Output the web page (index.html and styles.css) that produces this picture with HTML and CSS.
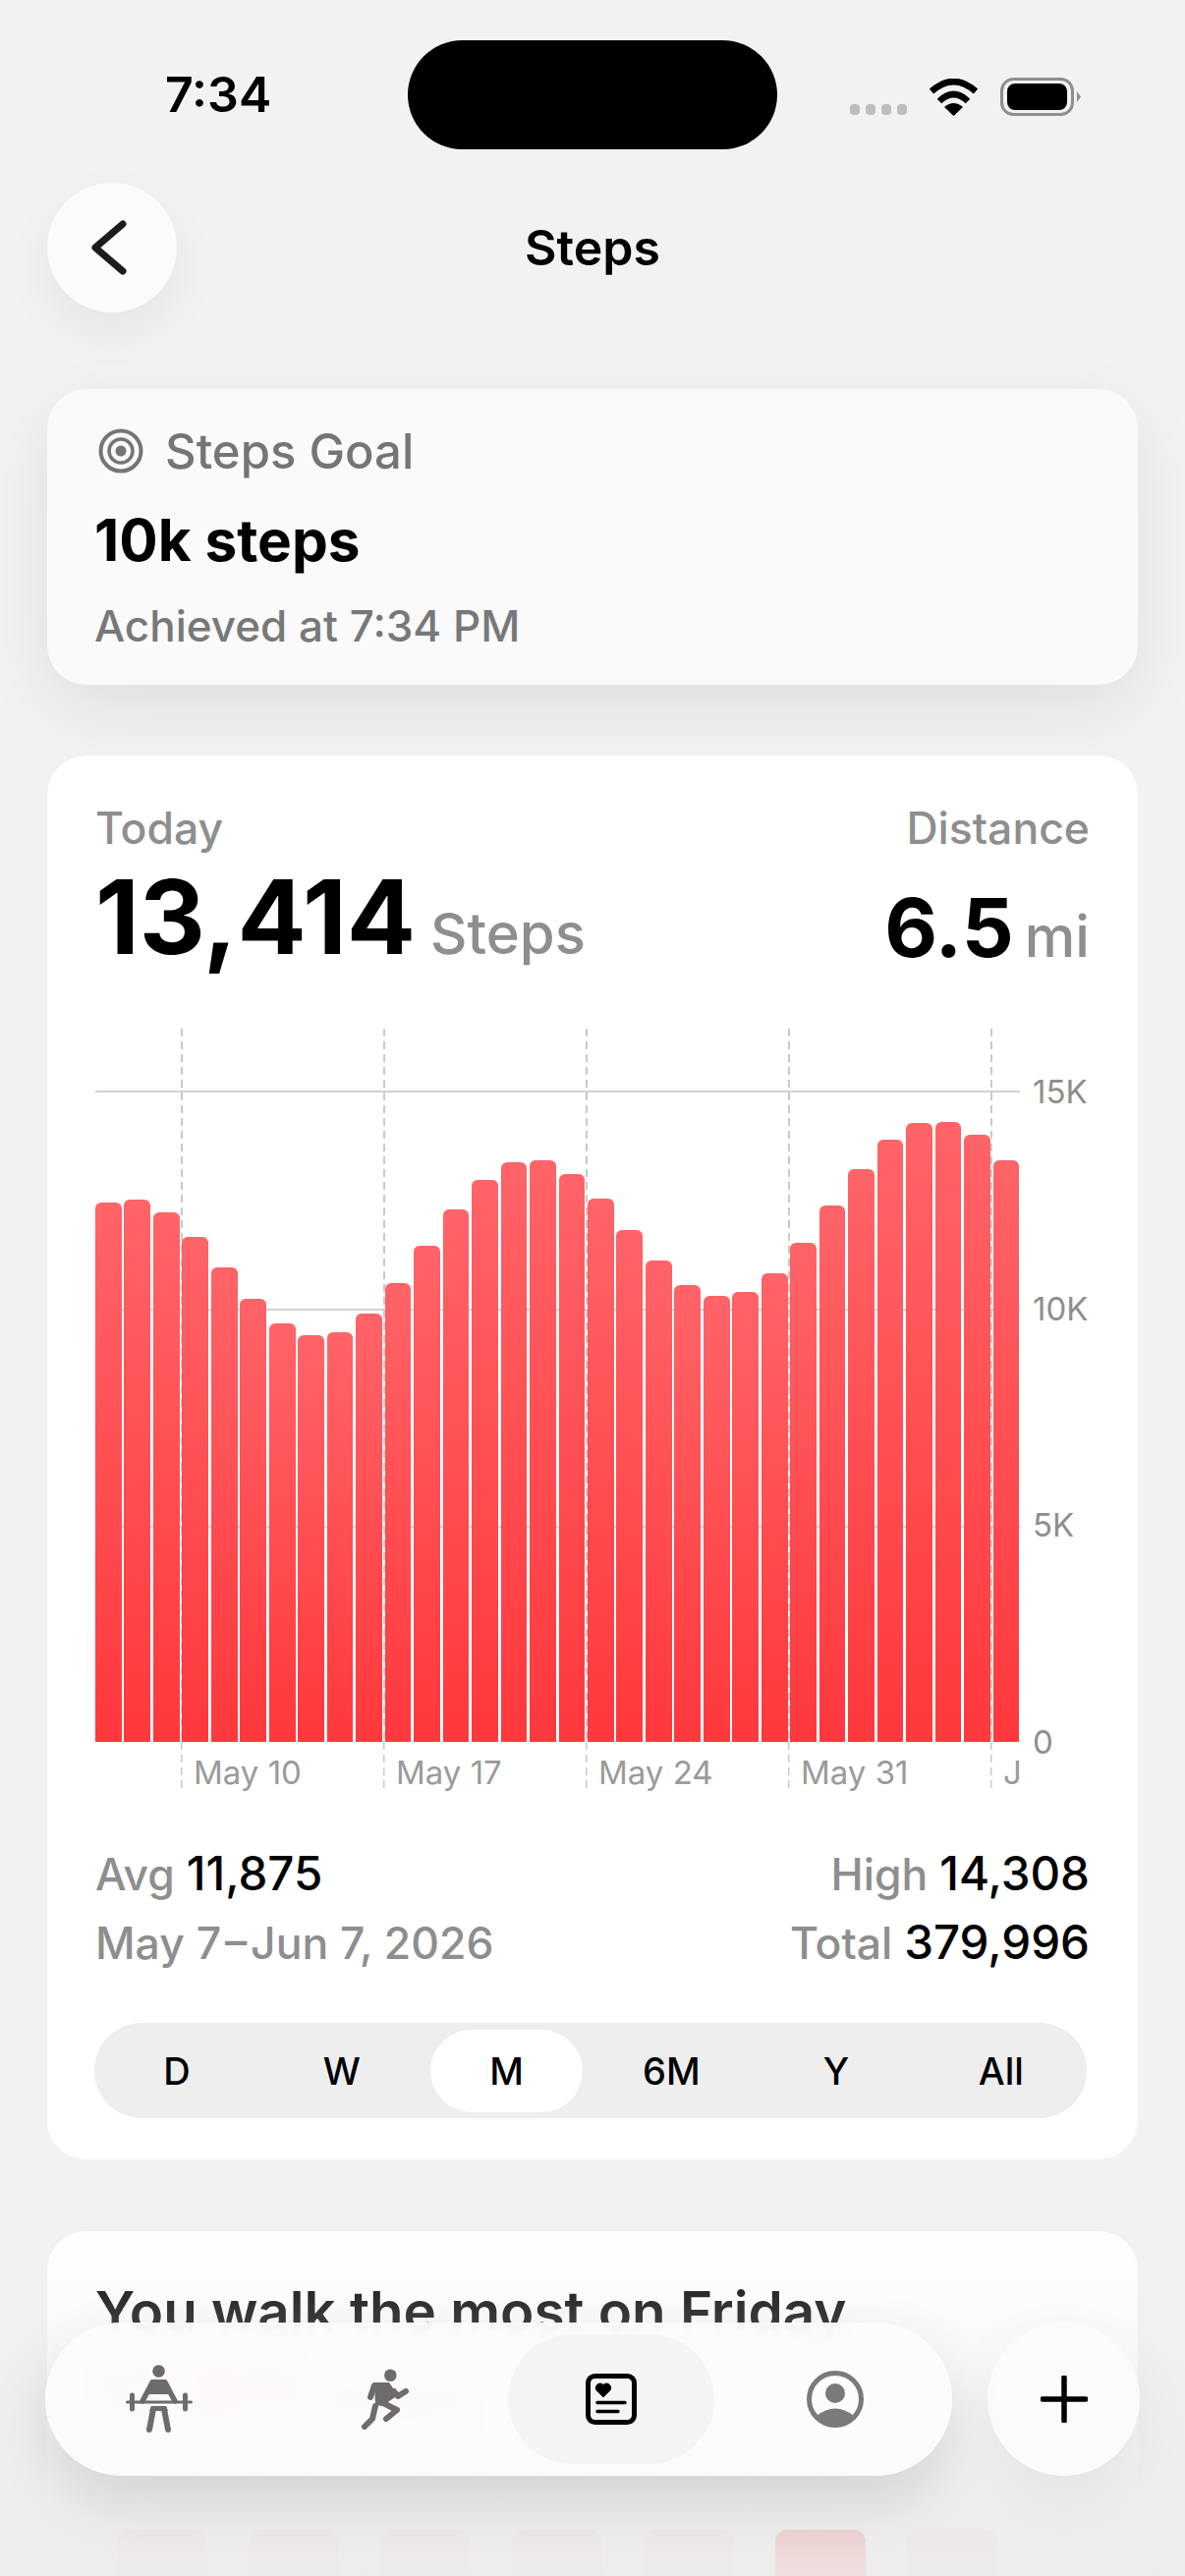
FILE: index.html
```html
<!DOCTYPE html>
<html lang="en">
<head>
	<meta charset="UTF-8">
	<title>Steps</title>
	<link rel="stylesheet" href="styles.css">
</head>
<body>
<div class="phone">
	<div class="status">
		<div class="time">7:34</div>
		<div class="island"></div>
		<div class="status-icons">
			<div class="dots"><i></i><i></i><i></i><i></i></div>
			<svg width="51" height="38" viewBox="0 0 51 38"><path d="M3 13Q25.500 -7 48 13" fill="none" stroke="#000" stroke-width="6.500"/><path d="M11 23Q25.500 9 40 23" fill="none" stroke="#000" stroke-width="6.500"/><path d="M25.500 38L16 29Q25.500 21 35 29Z"/></svg>
			<svg width="82" height="39" viewBox="0 0 82 39"><rect x="1.500" y="1.500" width="72" height="36" rx="12" fill="none" stroke="#8e8e8e" stroke-width="3"/><rect x="7" y="6" width="61" height="27" rx="8"/><path d="M78 14L82 19.500L78 25Z" fill="#8e8e8e"/></svg>
		</div>
	</div>

	<div class="nav">
		<div class="back">
			<svg width="40" height="64" viewBox="0 0 40 64"><path d="M35 8L7 32L35 56" fill="none" stroke="#1c1c1c" stroke-width="7" stroke-linecap="round" stroke-linejoin="round"/></svg>
		</div>
		<div class="nav-title">Steps</div>
		<div></div>
	</div>

	<div class="goal card">
		<div class="goal-head">
			<svg width="46" height="46" viewBox="0 0 46 46" fill="none" stroke="#757575"><circle cx="23" cy="23" r="20.500" stroke-width="4"/><circle cx="23" cy="23" r="12" stroke-width="3.500"/><circle cx="23" cy="23" r="5.500" fill="#757575" stroke="none"/></svg>
			<span>Steps Goal</span>
		</div>
		<div class="goal-value">10k steps</div>
		<div class="goal-note">Achieved at 7:34 PM</div>
	</div>

	<div class="main card">
		<div class="summary">
			<div>
				<div class="label">Today</div>
				<div class="big"><b>13,414</b> <span>Steps</span></div>
			</div>
			<div class="right">
				<div class="label">Distance</div>
				<div class="big small-big"><b>6.5</b> <span>mi</span></div>
			</div>
		</div>

		<div class="chart">
			<div class="plot">
				<div class="gridlines"><i></i><i></i><i></i></div>
				<div class="dashes"><i></i><i></i><i></i><i></i><i></i></div>
				<div class="bars">
					<div style="height:549px"></div><div style="height:552px"></div><div style="height:539px"></div><div style="height:514px"></div>
					<div style="height:483px"></div><div style="height:451px"></div><div style="height:426px"></div><div style="height:414px"></div>
					<div style="height:417px"></div><div style="height:436px"></div><div style="height:467px"></div><div style="height:505px"></div>
					<div style="height:542px"></div><div style="height:572px"></div><div style="height:590px"></div><div style="height:592px"></div>
					<div style="height:578px"></div><div style="height:553px"></div><div style="height:521px"></div><div style="height:490px"></div>
					<div style="height:465px"></div><div style="height:454px"></div><div style="height:458px"></div><div style="height:477px"></div>
					<div style="height:508px"></div><div style="height:546px"></div><div style="height:583px"></div><div style="height:613px"></div>
					<div style="height:630px"></div><div style="height:631px"></div><div style="height:618px"></div><div style="height:592px"></div>
				</div>
				<div class="yaxis"><span>15K</span><span>10K</span><span>5K</span><span>0</span></div>
			</div>
			<div class="xaxis">
				<span>May 10</span><span>May 17</span><span>May 24</span><span>May 31</span><span class="last">J</span>
			</div>
		</div>

		<div class="stats">
			<div class="stat-row"><div>Avg <b>11,875</b></div><div>High <b>14,308</b></div></div>
			<div class="stat-row date-row"><div>May 7&#8202;–&#8202;Jun 7, 2026</div><div>Total <b>379,996</b></div></div>
		</div>

		<div class="segments">
			<div>D</div><div>W</div><div class="on">M</div><div>6M</div><div>Y</div><div>All</div>
		</div>
	</div>

	<div class="friday card">
		<div class="friday-title">You walk the most on Friday</div>
		<div class="friday-value"><b>12,811</b> <span>steps</span></div>
		<div class="week">
			<div style="height:120px"></div><div style="height:98px"></div><div style="height:105px"></div><div style="height:115px"></div>
			<div style="height:122px"></div><div class="top" style="height:123px"></div><div style="height:123px"></div>
		</div>
	</div>

	<div class="fade"></div>

	<div class="dock">
		<div class="tabbar">
			<div class="tab">
				<svg width="68" height="70" viewBox="0 0 68 70" fill="none" stroke="#6f6b6b" stroke-linecap="round">
					<circle cx="33.500" cy="6.500" r="6.300" fill="#6f6b6b" stroke="none"/>
					<path d="M26 15H41L45 30H22Z" fill="#6f6b6b" stroke="none"/>
					<path d="M27 18L17 37M40 18L50 37" stroke-width="5.500"/>
					<path d="M1.500 38H66.500" stroke-width="3"/>
					<path d="M6.500 31V45M60.500 31V45" stroke-width="5"/>
					<path d="M28 45L24 66M39 45L43 66" stroke-width="6"/>
					<path d="M26 42H41L43 47H24Z" fill="#6f6b6b" stroke="none"/>
				</svg>
			</div>
			<div class="tab">
				<svg width="48" height="62" viewBox="0 0 48 62" fill="none" stroke="#6f6b6b" stroke-width="6" stroke-linecap="round" stroke-linejoin="round">
					<circle cx="29.300" cy="6.700" r="6.300" fill="#6f6b6b" stroke="none"/>
					<path d="M13 14H28L37 27L21 38L14 37Z" fill="#6f6b6b" stroke="none"/>
					<path d="M13 17L9 29M33 23L37 28L45 23"/>
					<path d="M14 38L11 51L3 59M22 35L36 42L25 51"/>
				</svg>
			</div>
			<div class="tab on">
				<svg width="52" height="52" viewBox="0 0 52 52" fill="none" stroke="#000"><rect x="2.500" y="2.500" width="47" height="47" rx="7" stroke-width="5"/><path d="M18 24L11.500 17.500A4.400 4.400 0 0 1 18 11.500A4.400 4.400 0 0 1 24.500 17.500Z" fill="#000" stroke="#000" stroke-width="1"/><path d="M12 29.500H40M12 38.500H33" stroke-width="3.500" stroke-linecap="round"/></svg>
			</div>
			<div class="tab">
				<svg width="58" height="58" viewBox="0 0 58 58" fill="#7a7a7a"><circle cx="29" cy="29" r="26.500" fill="none" stroke="#7a7a7a" stroke-width="5"/><circle cx="29" cy="23" r="10"/><path d="M10 46Q29 31 48 46A27 27 0 0 1 10 46Z"/></svg>
			</div>
		</div>
		<div class="plus">
			<svg width="48" height="48" viewBox="0 0 48 48"><path d="M24 2V46M2 24H46" fill="none" stroke="#000" stroke-width="5.500" stroke-linecap="round"/></svg>
		</div>
	</div>
</div>
</body>
</html>
```

FILE: styles.css
```css
* {
	box-sizing: border-box;
}

body {
	margin: 0;
	background: #f2f2f2;
	font-family: Inter, "Noto Sans", sans-serif;
	color: #000;
}

.phone {
	position: relative;
	width: 1206px;
	height: 2622px;
	overflow: hidden;
	background: #f2f2f2;
}

/* status bar */
.status {
	display: grid;
	grid-template-columns: 1fr auto 1fr;
	align-items: center;
	padding-top: 41px;
}

.time {
	padding-left: 168px;
	font-size: 50px;
	font-weight: 600;
	line-height: 111px;
}

.island {
	width: 376px;
	height: 111px;
	border-radius: 56px;
	background: #000;
}

.status-icons {
	display: flex;
	justify-content: flex-end;
	align-items: flex-end;
	gap: 22px;
	padding-right: 106px;
	padding-top: 3px;
}

.dots {
	display: flex;
	gap: 5.500px;
	margin-bottom: 1px;
}

.dots i {
	width: 10.500px;
	height: 11px;
	border-radius: 4px;
	background: #bdbdbd;
}

/* nav */
.nav {
	display: grid;
	grid-template-columns: 1fr auto 1fr;
	align-items: center;
	margin-top: 34px;
	padding: 0 48px;
}

.back {
	display: flex;
	justify-content: center;
	align-items: center;
	width: 132px;
	height: 132px;
	border-radius: 50%;
	background: #fbfbfb;
	box-shadow: 0 20px 50px rgba(0, 0, 0, 0.06);
}

.back svg {
	margin-right: 8px;
}

.nav-title {
	font-size: 50px;
	font-weight: 600;
}

/* cards */
.card {
	margin: 0 48px;
	border-radius: 40px;
}

.goal {
	height: 301px;
	margin-top: 78px;
	padding: 35px 48px 0;
	background: #fafafa;
	box-shadow: 0 24px 70px rgba(0, 0, 0, 0.08);
}

.goal-head {
	display: flex;
	align-items: center;
	gap: 22px;
	height: 56px;
	color: #757575;
	font-size: 49px;
	font-weight: 550;
}

.goal-head svg {
	margin-left: 4px;
}

.goal-value {
	margin-top: 28px;
	font-size: 58.500px;
	font-weight: 700;
	line-height: 70px;
}

.goal-note {
	margin-top: 25px;
	color: #787878;
	font-size: 44px;
	font-weight: 500;
	line-height: 54px;
}

.main {
	height: 1429px;
	margin-top: 72px;
	padding: 48px 49px 0;
	background: #fff;
}

.summary {
	display: flex;
	justify-content: space-between;
	height: 230px;
}

.label {
	color: #8e8e8e;
	font-size: 44.500px;
	font-weight: 500;
	line-height: 52px;
}

.right {
	text-align: right;
}

.big {
	display: flex;
	align-items: baseline;
	gap: 15px;
	margin-top: 14px;
	line-height: 100px;
}

.big b {
	font-size: 104px;
	font-weight: 700;
}

.big span {
	color: #8e8e8e;
	font-size: 58px;
	font-weight: 500;
}

.small-big {
	justify-content: flex-end;
	gap: 11px;
	margin-top: 25px;
}

.small-big b {
	font-size: 83px;
}

/* chart */
.chart {
	height: 774px;
}

.plot {
	position: relative;
	height: 726px;
}

.gridlines {
	position: absolute;
	top: 63px;
	left: 0;
	display: flex;
	flex-direction: column;
	gap: 219.500px;
	width: 941px;
}

.gridlines i {
	height: 2px;
	background: #d2d2d2;
}

.dashes {
	position: absolute;
	top: 0;
	left: 87px;
	bottom: 0;
	display: flex;
	gap: 204.500px;
}

.dashes i {
	width: 1.500px;
	background: repeating-linear-gradient(#c9c9c9 0, #c9c9c9 8px, transparent 8px, transparent 13px);
}

.bars {
	position: absolute;
	left: 0;
	bottom: 0;
	display: flex;
	align-items: flex-end;
	gap: 2.750px;
	width: 940px;
}

.bars div {
	flex: 1;
	border-radius: 6px 6px 0 0;
	background: linear-gradient(#ff6468, #ff383c);
}

.yaxis {
	position: absolute;
	top: 64px;
	left: 954px;
	display: flex;
	flex-direction: column;
	justify-content: space-between;
	height: 662px;
	color: #8e8e8e;
	font-size: 33px;
}

.yaxis span {
	display: flex;
	align-items: center;
	height: 0;
}

.xaxis {
	display: flex;
	height: 48px;
	padding-left: 87px;
	color: #9a9a9a;
	font-size: 33px;
	line-height: 62px;
}

.xaxis span {
	width: 206px;
	padding-left: 13px;
	background: repeating-linear-gradient(#c9c9c9 0, #c9c9c9 8px, transparent 8px, transparent 13px) left top / 1.500px 100% no-repeat;
}

.xaxis .last {
	width: 40px;
}

/* stats */
.stats {
	margin-top: 52px;
}

.stat-row {
	display: flex;
	justify-content: space-between;
	align-items: baseline;
	color: #8e8e8e;
	font-size: 44.500px;
	font-weight: 500;
	line-height: 68px;
}

.date-row {
	margin-top: 1px;
}

.stat-row b {
	color: #000;
	font-size: 47.500px;
	font-weight: 500;
}

.segments {
	display: flex;
	align-items: center;
	height: 97px;
	margin-top: 47px;
	margin-left: -1px;
	margin-right: 3px;
	border-radius: 48px;
	background: #eee;
	font-size: 38px;
	font-weight: 450;
}

.segments div {
	flex: 0 0 167.800px;
	text-align: center;
	line-height: 84px;
}

.segments .on {
	flex-basis: 155px;
	margin: 0 6.400px;
	border-radius: 42px;
	background: #fff;
}

/* next card, mostly under the tab bar */
.friday {
	height: 500px;
	margin-top: 73px;
	padding: 50px 49px 0;
	background: linear-gradient(#fff 0, #fff 170px, rgba(255, 255, 255, 0) 290px);
}

.friday-title {
	font-size: 56.500px;
	font-weight: 600;
	line-height: 64px;
}

.friday-value {
	display: flex;
	align-items: baseline;
	gap: 20px;
	margin-top: 14px;
	line-height: 72px;
}

.friday-value b {
	color: #ff383c;
	font-size: 72px;
	font-weight: 700;
}

.friday-value span {
	color: #8e8e8e;
	font-size: 60px;
	font-weight: 500;
}

.week {
	display: flex;
	align-items: flex-start;
	gap: 42px;
	margin-top: 100px;
	margin-left: 22px;
}

.week div {
	width: 92px;
	border-radius: 12px 12px 0 0;
	background: rgba(255, 56, 60, 0.12);
}

.week .top {
	background: rgba(255, 56, 60, 0.7);
}

.fade {
	position: absolute;
	left: 0;
	right: 0;
	bottom: 0;
	height: 360px;
	background: linear-gradient(rgba(238, 238, 238, 0), rgba(236, 236, 236, 0.9));
}

/* tab bar */
.dock {
	position: absolute;
	left: 46px;
	right: 46px;
	bottom: 102px;
	display: flex;
	justify-content: space-between;
}

.tabbar {
	display: flex;
	align-items: center;
	width: 923px;
	height: 156px;
	padding-left: 1px;
	border-radius: 78px;
	background: rgba(252, 252, 252, 0.93);
	backdrop-filter: blur(14px);
	box-shadow: 0 24px 60px rgba(0, 0, 0, 0.12);
}

.tab {
	display: flex;
	flex: 0 0 230px;
	justify-content: center;
	align-items: center;
	height: 132px;
}

.tab.on {
	flex-basis: 210px;
	margin: 0 8px 0 10px;
	border-radius: 66px;
	background: #f4f4f4;
}

.plus {
	display: flex;
	justify-content: center;
	align-items: center;
	width: 155px;
	height: 156px;
	border-radius: 50%;
	background: #fbfbfb;
	box-shadow: 0 20px 60px rgba(0, 0, 0, 0.06);
}
```
